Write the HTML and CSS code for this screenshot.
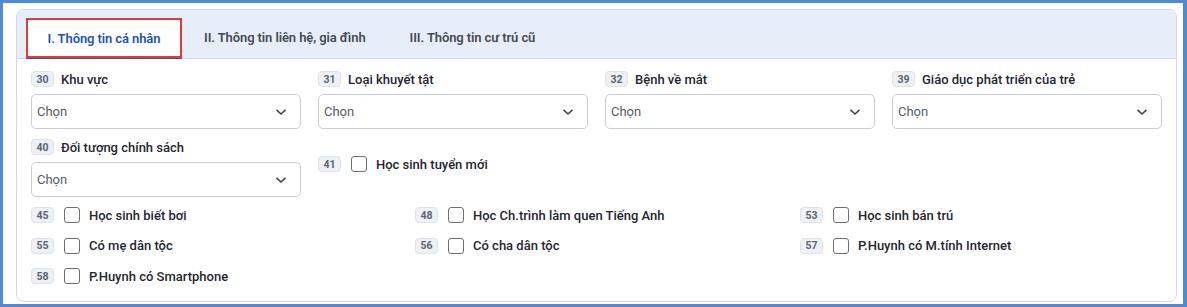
FILE: index.html
```html
<!DOCTYPE html>
<html lang="vi">
<head>
<meta charset="utf-8">
<title>Thông tin cá nhân</title>
<link rel="stylesheet" href="styles.css">
</head>
<body>
<div class="frame">
  <div class="card">
    <div class="tabs">
      <div class="tab active">I. Thông tin cá nhân</div>
      <div class="tab">II. Thông tin liên hệ, gia đình</div>
      <div class="tab">III. Thông tin cư trú cũ</div>
    </div>
    <div class="content">
      <div class="fields">
        <div class="field">
          <div class="field-label"><span class="badge">30</span><span class="label">Khu vực</span></div>
          <div class="select"><span>Chọn</span><svg class="chev" width="12" height="8" viewBox="0 0 12 8"><path d="M1.5 1.8 L6 6 L10.5 1.8" fill="none" stroke="#444" stroke-width="1.6"/></svg></div>
        </div>
        <div class="field">
          <div class="field-label"><span class="badge">31</span><span class="label">Loại khuyết tật</span></div>
          <div class="select"><span>Chọn</span><svg class="chev" width="12" height="8" viewBox="0 0 12 8"><path d="M1.5 1.8 L6 6 L10.5 1.8" fill="none" stroke="#444" stroke-width="1.6"/></svg></div>
        </div>
        <div class="field">
          <div class="field-label"><span class="badge">32</span><span class="label">Bệnh về mắt</span></div>
          <div class="select"><span>Chọn</span><svg class="chev" width="12" height="8" viewBox="0 0 12 8"><path d="M1.5 1.8 L6 6 L10.5 1.8" fill="none" stroke="#444" stroke-width="1.6"/></svg></div>
        </div>
        <div class="field">
          <div class="field-label"><span class="badge">39</span><span class="label">Giáo dục phát triển của trẻ</span></div>
          <div class="select"><span>Chọn</span><svg class="chev" width="12" height="8" viewBox="0 0 12 8"><path d="M1.5 1.8 L6 6 L10.5 1.8" fill="none" stroke="#444" stroke-width="1.6"/></svg></div>
        </div>
        <div class="field">
          <div class="field-label"><span class="badge">40</span><span class="label">Đối tượng chính sách</span></div>
          <div class="select"><span>Chọn</span><svg class="chev" width="12" height="8" viewBox="0 0 12 8"><path d="M1.5 1.8 L6 6 L10.5 1.8" fill="none" stroke="#444" stroke-width="1.6"/></svg></div>
        </div>
        <div class="field field-check">
          <div class="check"><span class="badge">41</span><span class="box"></span><span class="check-label">Học sinh tuyển mới</span></div>
        </div>
      </div>
      <div class="checks">
        <div class="check"><span class="badge">45</span><span class="box"></span><span class="check-label">Học sinh biết bơi</span></div>
        <div class="check"><span class="badge">48</span><span class="box"></span><span class="check-label">Học Ch.trình làm quen Tiếng Anh</span></div>
        <div class="check"><span class="badge">53</span><span class="box"></span><span class="check-label">Học sinh bán trú</span></div>
        <div class="check"><span class="badge">55</span><span class="box"></span><span class="check-label">Có mẹ dân tộc</span></div>
        <div class="check"><span class="badge">56</span><span class="box"></span><span class="check-label">Có cha dân tộc</span></div>
        <div class="check"><span class="badge">57</span><span class="box"></span><span class="check-label">P.Huynh có M.tính Internet</span></div>
        <div class="check"><span class="badge">58</span><span class="box"></span><span class="check-label">P.Huynh có Smartphone</span></div>
      </div>
    </div>
  </div>
</div>
</body>
</html>
```
FILE: styles.css
```css
* { box-sizing: border-box; }
html, body { margin: 0; padding: 0; background: #fff; }
body {
  font-family: Roboto, "Noto Sans", "Liberation Sans", sans-serif;
  width: 1187px;
  height: 307px;
  overflow: hidden;
}
.frame {
  width: 1187px;
  height: 307px;
  border-style: solid;
  border-color: #5289d2;
  border-width: 3px 4px 3px 3px;
  padding: 6px 6px 2px 13px;
  background: #fff;
}
.card {
  height: 100%;
  border: 1px solid #d3d9e2;
  border-radius: 8px;
  overflow: hidden;
  background: #fff;
}
.tabs {
  display: flex;
  align-items: flex-end;
  height: 49px;
  background: #e8eef9;
  border-bottom: 1px solid #cfdcf1;
  padding-left: 9px;
}
.tab {
  height: 40px;
  display: flex;
  align-items: center;
  padding: 0 22px 2px 22px;
  font-size: 13px;
  font-weight: 600;
  letter-spacing: -0.1px;
  color: #444b55;
}
.tab.active {
  width: 156px;
  justify-content: center;
  padding: 0;
  background: #fff;
  color: #1d55b5;
  border: 2px solid #e53935;
  box-shadow: 0 1px 0 #2d5cae;
}
.content {
  padding: 12px 14px 0 14px;
}
.fields {
  display: grid;
  grid-template-columns: repeat(4, 270px);
  column-gap: 17px;
  row-gap: 10px;
}
.field-label {
  display: flex;
  align-items: center;
  gap: 7px;
  height: 16px;
  margin-bottom: 7px;
}
.badge {
  display: inline-flex;
  align-items: center;
  justify-content: center;
  width: 23px;
  height: 16px;
  flex: none;
  background: #edf0f4;
  border: 1px solid #dfe3e9;
  border-radius: 4px;
  font-size: 10.5px;
  font-weight: 700;
  color: #5b6472;
}
.label {
  font-size: 13px;
  font-weight: 500;
  color: #1f2630;
}
.select {
  height: 35px;
  border: 1px solid #c9cdd3;
  border-radius: 5px;
  display: flex;
  align-items: center;
  justify-content: space-between;
  padding: 0 13px 0 5px;
  font-size: 13px;
  color: #555b63;
}
.chev { display: block; margin-top: 1px; }
.field-check {
  padding-top: 17px;
}
.check {
  display: flex;
  align-items: center;
  height: 16px;
}
.box {
  width: 16px;
  height: 16px;
  flex: none;
  border: 1.5px solid #6b6f75;
  border-radius: 3px;
  margin-left: 10px;
  margin-right: 9px;
  background: #fff;
}
.check-label {
  font-size: 13px;
  font-weight: 500;
  color: #1f2630;
}
.checks {
  display: grid;
  grid-template-columns: 384px 385px 1fr;
  row-gap: 14.5px;
  margin-top: 10px;
}
```
